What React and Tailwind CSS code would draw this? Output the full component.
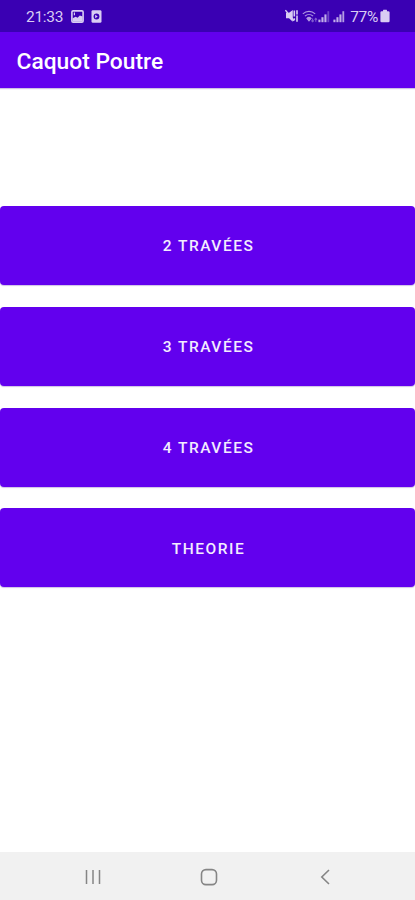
import React from 'react';

const menuItems = [
  { id: 'deux', label: '2 Travées' },
  { id: 'trois', label: '3 Travées' },
  { id: 'quatre', label: '4 Travées' },
  { id: 'theorie', label: 'Theorie' },
];

const PictureIcon = () => (
  <svg width="13" height="13" viewBox="0 0 13 13" fill="none">
    <rect x="0.9" y="0.9" width="11.2" height="11.2" rx="1.2" stroke="currentColor" strokeWidth="1.6" />
    <path d="M1.6 11.4V8.3l3-1.6 2 1 2.2-2.2 2.8 1v4.9z" fill="currentColor" />
    <path d="M3.4 2.6v2.6" stroke="currentColor" strokeWidth="1.2" />
  </svg>
);

const RecorderIcon = () => (
  <svg width="11" height="13" viewBox="0 0 11 13" fill="none">
    <rect x="0.5" y="0.2" width="10" height="12.6" rx="1.4" fill="currentColor" />
    <circle cx="5.5" cy="6.5" r="2.9" fill="#3a00b3" />
    <path d="M4.2 4.8l2.5 1.7-2.5 1.7z" fill="currentColor" />
  </svg>
);

const MuteIcon = () => (
  <svg width="14" height="14" viewBox="0 0 14 14" fill="none">
    <path d="M1 3.8h3L7.8 1v11.8L4 9.2H1z" fill="currentColor" />
    <path d="M0.4 1.2l8.6 10.6" stroke="currentColor" strokeWidth="1.4" />
    <path d="M9.3 1.6v6M9.3 9.2v2M12 1.2v4.4M12 6.4v6.4" stroke="currentColor" strokeWidth="1.6" />
  </svg>
);

const WifiIcon = () => (
  <svg width="16" height="13" viewBox="0 0 16 13" fill="none" stroke="currentColor" strokeWidth="1.1">
    <path d="M0.8 3.8C4.4 0.5 9.6 0.5 13.2 3.8" />
    <path d="M2.9 6.1c2.4-2.2 5.8-2.2 8.2 0" />
    <path d="M4.9 8.3c1.3-1.1 2.9-1.1 4.2 0L7 10.9z" fill="currentColor" />
    <path d="M10.6 8.4v3.2M9.4 10.5l1.2 1.2 1.2-1.2M13.8 11.8V8.4M12.6 9.6l1.2-1.2 1.2 1.2" opacity="0.6" />
  </svg>
);

const SignalIcon = ({ weak }) => (
  <svg width="12" height="13" viewBox="0 0 12 13" fill="currentColor">
    <rect x="0.4" y="9.6" width="2.1" height="2.6" />
    <rect x="3.4" y="7.2" width="2.1" height="5" />
    <rect x="6.4" y="4.4" width="2.1" height="7.8" />
    <rect x="9.4" y="1.2" width="1.8" height="11" opacity={weak ? 0.4 : 0.9} />
  </svg>
);

const BatteryIcon = () => (
  <svg width="10" height="14" viewBox="0 0 10 14" fill="currentColor">
    <rect x="3" y="0.8" width="4" height="2.4" rx="0.5" />
    <rect x="0.4" y="2.2" width="9.2" height="11" rx="1.3" />
  </svg>
);

const StatusBar = () => (
  <div className="flex h-8 shrink-0 items-center bg-[#3a00b3] pl-[26px] pr-[25px] text-[#d9cdf3]">
    <span className="w-[45px] pt-[3px] text-[15.5px] tracking-[-0.3px]">21:33</span>
    <PictureIcon />
    <span className="ml-[7px]"><RecorderIcon /></span>
    <div className="ml-auto flex items-center">
      <MuteIcon />
      <span className="ml-[3px] opacity-75"><WifiIcon /></span>
      <span className="opacity-85"><SignalIcon weak /></span>
      <span className="ml-[3px] opacity-85"><SignalIcon /></span>
      <span className="ml-[5px] mr-px pt-[3px] text-[15.5px] tracking-[-0.3px]">77%</span>
      <span className="ml-px"><BatteryIcon /></span>
    </div>
  </div>
);

const MenuButton = ({ label }) => (
  <button className="h-[79px] w-full rounded-[4px] bg-[#6200ee] pl-0.5 pt-[3px] text-[15.5px] font-medium uppercase tracking-[1.5px] text-[#f3ecff] shadow-[0_1px_1px_rgba(60,0,150,0.25)]">
    {label}
  </button>
);

const NavigationBar = () => (
  <div className="flex h-12 shrink-0 items-center bg-[#f1f1f1] pl-[84px] pt-0.5 text-[#858585]">
    <svg width="18" height="18" viewBox="0 0 18 18" stroke="currentColor" strokeWidth="1.5">
      <path d="M2.5 2v14M9 2v14M15.5 2v14" />
    </svg>
    <svg className="ml-[98px]" width="18" height="18" viewBox="0 0 18 18" fill="none" stroke="currentColor" strokeWidth="1.6">
      <rect x="1.5" y="1.6" width="15" height="15" rx="4.4" />
    </svg>
    <svg className="ml-[99px]" width="18" height="18" viewBox="0 0 18 18" fill="none" stroke="currentColor" strokeWidth="1.6">
      <path d="M12 2L4.8 9l7.2 7" />
    </svg>
  </div>
);

const App = () => {
  return (
    <div className="flex h-[900px] w-full flex-col overflow-hidden bg-white font-[Roboto,sans-serif]">
      <StatusBar />
      <header className="flex h-14 shrink-0 items-center bg-[#6200ee] pl-[16.5px] pt-[5px] shadow-[0_1px_1px_rgba(60,0,150,0.25)]">
        <h1 className="text-[22.8px] font-medium text-white">Caquot Poutre</h1>
      </header>
      <main className="flex flex-1 flex-col gap-[21.8px] pt-[118px]">
        {menuItems.map((item) => (
          <MenuButton key={item.id} label={item.label} />
        ))}
      </main>
      <NavigationBar />
    </div>
  );
};

export default App;
